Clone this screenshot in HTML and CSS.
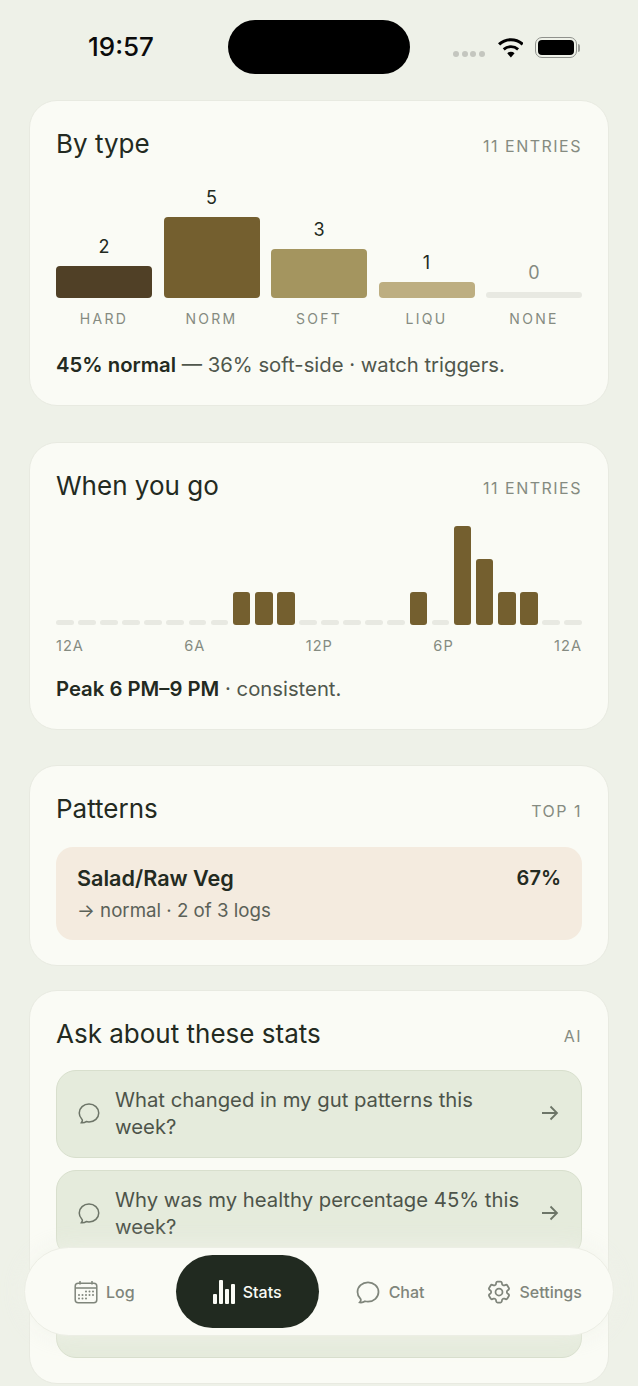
FILE: index.html
```html
<!DOCTYPE html>
<html lang="en">
<head>
  <meta charset="UTF-8">
  <title>Stats</title>
  <link rel="stylesheet" href="styles.css">
</head>
<body>

<svg class="defs" width="0" height="0" aria-hidden="true">
  <symbol id="bubble" viewBox="0 0 24 24">
    <path d="M12 20.25c4.97 0 9-3.694 9-8.25s-4.03-8.25-9-8.25S3 7.444 3 12c0 2.104.859 4.023 2.273 5.48.432.447.74 1.04.586 1.641a4.483 4.483 0 01-.923 1.785A5.969 5.969 0 006 21c1.282 0 2.47-.402 3.445-1.087.81.22 1.668.337 2.555.337z"/>
  </symbol>
  <symbol id="arrow" viewBox="0 0 18 18">
    <path d="M1 9h15M9.500 2.500 16 9l-6.500 6.500"/>
  </symbol>
</svg>

<div class="status">
  <div class="time">19:57</div>
  <div class="island"></div>
  <div class="status-icons">
    <div class="dots"><i></i><i></i><i></i><i></i></div>
    <svg class="wifi" width="26" height="20" viewBox="0 0 26 20">
      <path d="M13 19.500 9.300 15.300a5.400 5.400 0 0 1 7.400 0z"/>
      <path d="M6.700 12.500a9.300 9.300 0 0 1 12.600 0l1.900-2.200a12.300 12.300 0 0 0-16.400 0z"/>
      <path d="M2.200 7.400a16 16 0 0 1 21.600 0L26 5.100a19.300 19.300 0 0 0-26 0z"/>
    </svg>
    <div class="battery"><div class="battery-fill"></div></div>
    <div class="battery-nub"></div>
  </div>
</div>

<main class="page">
  <section class="card card-type">
    <div class="card-head">
      <h2>By type</h2>
      <span class="tag">11 ENTRIES</span>
    </div>
    <div class="types">
      <div class="type"><span class="count">2</span><div class="bar hard"></div><span class="type-name">HARD</span></div>
      <div class="type"><span class="count">5</span><div class="bar norm"></div><span class="type-name">NORM</span></div>
      <div class="type"><span class="count">3</span><div class="bar soft"></div><span class="type-name">SOFT</span></div>
      <div class="type"><span class="count">1</span><div class="bar liqu"></div><span class="type-name">LIQU</span></div>
      <div class="type"><span class="count muted">0</span><div class="bar none"></div><span class="type-name">NONE</span></div>
    </div>
    <p class="summary"><b>45% normal</b> — 36% soft-side · watch triggers.</p>
  </section>

  <section class="card card-when">
    <div class="card-head">
      <h2>When you go</h2>
      <span class="tag">11 ENTRIES</span>
    </div>
    <div class="hours" id="hours"></div>
    <div class="hour-labels">
      <span>12A</span><span>6A</span><span>12P</span><span>6P</span><span>12A</span>
    </div>
    <p class="summary"><b>Peak 6 PM–9 PM</b> · consistent.</p>
  </section>

  <section class="card card-patterns">
    <div class="card-head">
      <h2>Patterns</h2>
      <span class="tag">TOP 1</span>
    </div>
    <div class="pattern">
      <div class="pattern-top"><b>Salad/Raw Veg</b><b class="pct">67%</b></div>
      <div class="pattern-sub">→ normal · 2 of 3 logs</div>
    </div>
  </section>

  <section class="card card-ask">
    <div class="card-head">
      <h2>Ask about these stats</h2>
      <span class="tag">AI</span>
    </div>
    <div class="asks">
      <div class="ask">
        <svg class="ask-icon" width="26" height="26"><use href="#bubble"/></svg>
        <span class="ask-text">What changed in my gut patterns this week?</span>
        <svg class="ask-arrow" width="18" height="18"><use href="#arrow"/></svg>
      </div>
      <div class="ask">
        <svg class="ask-icon" width="26" height="26"><use href="#bubble"/></svg>
        <span class="ask-text">Why was my healthy percentage 45% this week?</span>
        <svg class="ask-arrow" width="18" height="18"><use href="#arrow"/></svg>
      </div>
      <div class="ask">
        <svg class="ask-icon" width="26" height="26"><use href="#bubble"/></svg>
        <span class="ask-text">What should I try next week to feel better?</span>
        <svg class="ask-arrow" width="18" height="18"><use href="#arrow"/></svg>
      </div>
    </div>
  </section>
</main>

<nav class="nav">
  <a class="nav-item nav-log">
    <svg width="24" height="24" viewBox="0 0 24 24" class="nav-icon">
      <rect x="1.200" y="3.200" width="21.600" height="19.600" rx="3"/>
      <path d="M1.200 8h21.600M6 1v3.500M18 1v3.500"/>
      <g class="cal-dots">
        <circle cx="12" cy="11.500" r="1"/><circle cx="15.500" cy="11.500" r="1"/><circle cx="19" cy="11.500" r="1"/>
        <circle cx="5" cy="15" r="1"/><circle cx="8.500" cy="15" r="1"/><circle cx="12" cy="15" r="1"/><circle cx="15.500" cy="15" r="1"/><circle cx="19" cy="15" r="1"/>
        <circle cx="5" cy="18.500" r="1"/><circle cx="8.500" cy="18.500" r="1"/><circle cx="12" cy="18.500" r="1"/>
      </g>
    </svg>
    <span>Log</span>
  </a>
  <a class="nav-item active">
    <span class="stat-bars"><i class="b1"></i><i class="b2"></i><i class="b3"></i><i class="b4"></i></span>
    <span>Stats</span>
  </a>
  <a class="nav-item nav-chat">
    <svg width="28" height="28" class="nav-icon"><use href="#bubble"/></svg>
    <span>Chat</span>
  </a>
  <a class="nav-item nav-settings">
    <svg width="28" height="28" viewBox="0 0 24 24" class="nav-icon">
      <path d="M9.594 3.940c.09-.542.56-.94 1.110-.94h2.593c.55 0 1.020.398 1.110.94l.213 1.281c.063.374.313.686.645.87.074.04.147.083.22.127.324.196.72.257 1.075.124l1.217-.456a1.125 1.125 0 011.370.49l1.296 2.247a1.125 1.125 0 01-.26 1.431l-1.003.827c-.293.24-.438.613-.431.992a6.759 6.759 0 010 .255c-.007.378.138.75.43.99l1.005.828c.424.35.534.954.26 1.430l-1.298 2.247a1.125 1.125 0 01-1.369.491l-1.217-.456c-.355-.133-.75-.072-1.076.124a6.570 6.570 0 01-.22.128c-.331.183-.581.495-.644.869l-.213 1.280c-.09.543-.56.941-1.110.941h-2.594c-.55 0-1.020-.398-1.110-.94l-.213-1.281c-.062-.374-.312-.686-.644-.87a6.520 6.520 0 01-.22-.127c-.325-.196-.72-.257-1.076-.124l-1.217.456a1.125 1.125 0 01-1.369-.49l-1.297-2.247a1.125 1.125 0 01.26-1.431l1.004-.827c.292-.24.437-.613.43-.992a6.932 6.932 0 010-.255c.007-.378-.138-.75-.43-.99l-1.004-.828a1.125 1.125 0 01-.26-1.430l1.297-2.247a1.125 1.125 0 011.370-.491l1.216.456c.356.133.751.072 1.076-.124.072-.044.146-.087.22-.128.332-.183.582-.495.644-.869l.214-1.281z"/>
      <circle cx="12" cy="12" r="3"/>
    </svg>
    <span>Settings</span>
  </a>
</nav>

<script>
  // logs per hour of day, 0 = midnight
  const logs = { 8: 1, 9: 1, 10: 1, 16: 1, 18: 3, 19: 2, 20: 1, 21: 1 };
  const hours = document.getElementById('hours');
  for (let h = 0; h < 24; h++) {
    const bar = document.createElement('div');
    bar.className = logs[h] ? 'hour' : 'hour empty';
    if (logs[h]) bar.style.height = `${logs[h] * 33}px`;
    hours.appendChild(bar);
  }
</script>
</body>
</html>
```

FILE: styles.css
```css
* {
  box-sizing: border-box;
}

html, body {
  margin: 0;
  height: 1386px;
  overflow: hidden;
}

body {
  position: relative;
  background: #eef1e8;
  font-family: Inter, "Liberation Sans", sans-serif;
  color: #232a21;
}

.defs {
  position: absolute;
}

/* status bar */
.status {
  height: 100px;
  position: relative;
}

.time {
  position: absolute;
  left: 88px;
  top: 31px;
  font-size: 26px;
  line-height: 32px;
  font-weight: 500;
  color: #0b0b0b;
}

.island {
  position: absolute;
  left: 228px;
  top: 20px;
  width: 182px;
  height: 54px;
  border-radius: 27px;
  background: #000;
}

.status-icons {
  position: absolute;
  left: 453px;
  top: 37px;
  width: 127px;
  height: 21px;
  display: flex;
  align-items: center;
}

.dots {
  display: flex;
  gap: 2.500px;
  margin-top: 13px;
  margin-right: 13px;
}

.dots i {
  width: 6px;
  height: 6px;
  border-radius: 50%;
  background: #c4c6bf;
}

.wifi {
  fill: #000;
  margin-right: 12px;
}

.battery {
  width: 42px;
  height: 21px;
  border: 1.500px solid #8f918c;
  border-radius: 7px;
  padding: 2px;
}

.battery-fill {
  height: 100%;
  background: #000;
  border-radius: 4px;
}

.battery-nub {
  width: 2px;
  height: 8px;
  background: #9a9c97;
  border-radius: 0 2px 2px 0;
  margin-left: 1px;
}

/* cards */
.page {
  display: flex;
  flex-direction: column;
  padding: 0 29px;
}

.card {
  background: #fafbf5;
  border: 1px solid #e8eae1;
  border-radius: 28px;
  padding: 26px 26px 0;
}

.card-type {
  height: 306px;
  margin-bottom: 36px;
}

.card-when {
  height: 288px;
  margin-bottom: 35px;
}

.card-patterns {
  height: 201px;
  margin-bottom: 24px;
}

.card-ask {
  height: 394px;
}

.card-head {
  display: flex;
  justify-content: space-between;
  align-items: center;
  height: 34px;
}

h2 {
  margin: 0 0 2px;
  font-size: 26px;
  font-weight: 400;
  color: #232a21;
}

.tag {
  font-size: 16px;
  font-weight: 400;
  letter-spacing: 1.500px;
  color: #858b81;
  margin-top: 4px;
}

.summary {
  margin: 0;
  font-size: 20.300px;
  line-height: 28px;
  color: #50574d;
}

.summary b {
  font-weight: 600;
  color: #232a21;
}

/* by type */
.types {
  display: flex;
  gap: 11.500px;
  height: 143px;
  margin-top: 25px;
  align-items: stretch;
}

.type {
  flex: 1;
  display: flex;
  flex-direction: column;
  align-items: center;
  justify-content: flex-end;
}

.count {
  font-size: 18px;
  line-height: 22px;
  margin-bottom: 8px;
  color: #232a21;
}

.count.muted {
  color: #858b81;
}

.bar {
  width: 100%;
  border-radius: 4px;
}

.bar.hard { height: 32px; background: #504026; }
.bar.norm { height: 81px; background: #745f2f; }
.bar.soft { height: 49px; background: #a4955f; }
.bar.liqu { height: 16px; background: #bdae81; }
.bar.none { height: 6px; background: #e8e9e2; }

.type-name {
  font-size: 14px;
  line-height: 20px;
  letter-spacing: 2.300px;
  color: #858b81;
  margin-top: 11px;
}

.card-type .summary {
  margin-top: 22px;
}

/* when you go */
.hours {
  display: flex;
  align-items: flex-end;
  gap: 4.400px;
  height: 100px;
  margin-top: 22px;
}

.hour {
  flex: 1;
  background: #745f2f;
  border-radius: 3px;
}

.hour.empty {
  height: 5px;
  background: #e8e9e2;
}

.hour-labels {
  display: flex;
  justify-content: space-between;
  margin-top: 13px;
  font-size: 14.600px;
  line-height: 17px;
  letter-spacing: 1px;
  color: #858b81;
}

.card-when .summary {
  margin-top: 20px;
}

/* patterns */
.pattern {
  margin-top: 21px;
  height: 93px;
  background: #f4ebdf;
  border-radius: 17px;
  padding: 18px 21px 0;
}

.pattern-top {
  display: flex;
  justify-content: space-between;
  font-size: 21.600px;
  line-height: 26px;
}

.pattern-top b {
  font-weight: 600;
}

.pattern-top .pct {
  font-size: 20px;
}

.pattern-sub {
  margin-top: 8px;
  font-size: 18.700px;
  line-height: 24px;
  color: #5b6158;
}

/* suggestions */
.asks {
  display: flex;
  flex-direction: column;
  gap: 12px;
  margin-top: 19px;
}

.ask {
  height: 88px;
  display: flex;
  align-items: center;
  background: #e5ebdc;
  border: 1px solid #d8dfcd;
  border-radius: 20px;
  padding: 0 22px 2px 19px;
}

.ask-icon {
  flex: none;
  fill: none;
  stroke: #6d7568;
  stroke-width: 1.400;
  margin-right: 13px;
}

.ask-text {
  flex: 1;
  font-size: 20.300px;
  line-height: 27px;
  color: #4d544a;
}

.ask-arrow {
  flex: none;
  fill: none;
  stroke: #6d7568;
  stroke-width: 1.800;
  margin-left: 14px;
}

/* bottom nav */
.nav {
  position: absolute;
  left: 24px;
  top: 1247px;
  width: 590px;
  height: 89px;
  display: flex;
  align-items: center;
  background: #fafbf5;
  border: 1px solid #eceee5;
  border-radius: 45px;
  box-shadow: 0 0 24px rgba(240, 242, 234, 0.8);
}

.nav-item {
  display: flex;
  align-items: center;
  gap: 8px;
  font-size: 16px;
  font-weight: 500;
  color: #7f857b;
}

.nav-icon {
  fill: none;
  stroke: #7f857b;
  stroke-width: 1.500;
}

.cal-dots {
  fill: #7f857b;
  stroke: none;
}

.nav-log {
  margin-left: 49px;
}

.active {
  margin-left: 41px;
  width: 143px;
  height: 73px;
  border-radius: 37px;
  background: #212a20;
  color: #fafbf5;
  justify-content: center;
}

.nav-chat {
  margin-left: 35px;
  gap: 7px;
}

.nav-settings {
  margin-left: 60px;
  gap: 7px;
}

.stat-bars {
  display: flex;
  align-items: flex-end;
  gap: 2px;
  height: 24px;
}

.stat-bars i {
  width: 4px;
  background: #fafbf5;
  border-radius: 1px;
}

.b1 { height: 10px; }
.b2 { height: 24px; }
.b3 { height: 15px; }
.b4 { height: 20px; }
```
